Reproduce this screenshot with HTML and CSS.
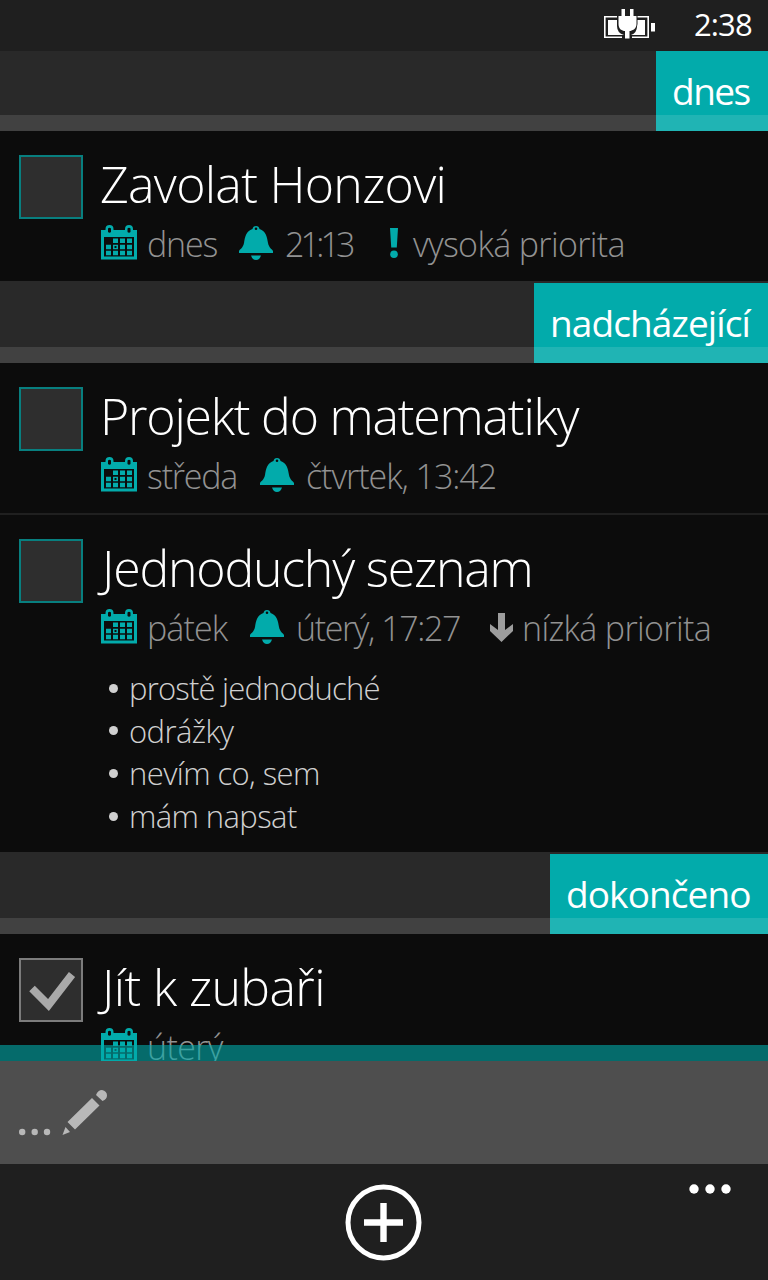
FILE: index.html
```html
<!DOCTYPE html>
<html lang="cs">
<head>
<meta charset="utf-8">
<title>Úkoly</title>
<link rel="stylesheet" href="styles.css">
</head>
<body>
<svg class="defs" aria-hidden="true">
  <symbol id="calendar" viewBox="0 0 36 35">
    <path fill="currentColor" fill-rule="evenodd" d="M0 5H4.500V4Q4.500 0 8.500 0T12.500 4V5H24V4Q24 0 28 0T32 4V5H36V34.500H0ZM7 3.500V7Q8.500 8.500 10 7V3.500Q8.500 2 7 3.500M26.500 3.500V7Q28 8.500 29.500 7V3.500Q28 2 26.500 3.500M3 12V31.500H33V12Z"/>
    <path fill="currentColor" fill-rule="evenodd" d="M12 13.500h5v4.500h-5zM19 13.500h5v4.500h-5zM26 13.500h5v4.500h-5zM5 19.700h5v4.500h-5zM12 19.700h5v4.500h-5zM13.500 21v2h2v-2zM19 19.700h5v4.500h-5zM26 19.700h5v4.500h-5zM5 25.800h5v4.400h-5zM12 25.800h5v4.400h-5zM19 25.800h5v4.400h-5zM26 25.800h5v4.400h-5z"/>
  </symbol>
  <symbol id="bell" viewBox="0 0 34 34">
    <path fill="currentColor" fill-rule="evenodd" d="M13.500 3Q14 0 17 0T20.500 3C27 5 28 11 29 17C30 22 33 23 34 25V27H0V25C1 23 4 22 5 17C6 11 7 5 13.500 3M17 1.500A1.300 1.300 0 0 0 17 4.100A1.300 1.300 0 0 0 17 1.500M12 29.500H22Q20.500 34 17 34T12 29.500"/>
  </symbol>
</svg>
<main class="screen">
  <header class="status">
    <svg class="battery" width="52" height="32" viewBox="0 0 52 32">
      <path fill="none" stroke="#fff" stroke-width="1.600" d="M13 7.800H.8V28.200H18M33 7.800H44.200V28.200H28"/>
      <path fill="#fff" d="M4 11H13V17Q13 24 20 26H4ZM33 11H41V26H27Q33 24 33 17ZM47 14h4v8.500h-4z"/>
      <path fill="#fff" stroke="#1f1f1f" stroke-width="2" paint-order="stroke" d="M17.500 0H21V7H26V0H29.500V7H32.500V15C32.500 20 28 22 25.500 22V29.500H21V22C18 22 14.500 20 14.500 15V7H17.500Z"/>
    </svg>
    <span class="clock">2:38</span>
  </header>

  <section class="group">
    <div class="head first"><h2 class="tab dnes"><span>dnes</span></h2></div>
    <article class="task">
      <span class="check"></span>
      <div class="body">
        <h3 class="title t1">Zavolat Honzovi</h3>
        <div class="meta">
          <svg class="cal"><use href="#calendar"/></svg><span class="w-dnes">dnes</span>
          <svg class="bell"><use href="#bell"/></svg><span class="w-2113">21:13</span>
          <svg class="bang" viewBox="0 0 8 30"><path fill="currentColor" d="M0 0H8L6.800 19.500H1.200Z"/><circle cx="4" cy="26.200" r="3.800" fill="currentColor"/></svg><span class="priority">vysoká priorita</span>
        </div>
      </div>
    </article>
  </section>

  <section class="group">
    <div class="head"><h2 class="tab nad"><span>nadcházející</span></h2></div>
    <article class="task ruled">
      <span class="check"></span>
      <div class="body">
        <h3 class="title t2">Projekt do matematiky</h3>
        <div class="meta">
          <svg class="cal"><use href="#calendar"/></svg><span class="w-streda">středa</span>
          <svg class="bell"><use href="#bell"/></svg><span class="w-ctvrtek">čtvrtek, 13:42</span>
        </div>
      </div>
    </article>
    <article class="task tall">
      <span class="check"></span>
      <div class="body">
        <h3 class="title t3">Jednoduchý seznam</h3>
        <div class="meta">
          <svg class="cal"><use href="#calendar"/></svg><span class="w-patek">pátek</span>
          <svg class="bell"><use href="#bell"/></svg><span class="w-utery">úterý, 17:27</span>
          <svg class="down" viewBox="0 0 23 29"><path fill="currentColor" d="M8 0H15V17L23 11V18L11.500 29L0 18V11L8 17Z"/></svg><span class="priority">nízká priorita</span>
        </div>
        <ul class="notes">
          <li>prostě jednoduché</li>
          <li>odrážky</li>
          <li>nevím co, sem</li>
          <li>mám napsat</li>
        </ul>
      </div>
    </article>
  </section>

  <section class="group last">
    <div class="head"><h2 class="tab dok"><span>dokončeno</span></h2></div>
    <article class="task">
      <span class="check done"><svg width="60" height="60" viewBox="0 0 60 60"><path fill="none" stroke="#a9a9a9" stroke-width="7.800" d="M11 28.500L27.500 45L51 14.500"/></svg></span>
      <div class="body">
        <h3 class="title t4">Jít k zubaři</h3>
        <div class="meta">
          <svg class="cal"><use href="#calendar"/></svg><span class="priority">úterý</span>
        </div>
      </div>
    </article>
    <div class="veil"></div>
  </section>

  <div class="composer">
    <svg width="90" height="48" viewBox="0 0 90 48" fill="#b8b8b8">
      <circle cx="3.200" cy="43" r="3.200"/><circle cx="15.700" cy="43" r="3.200"/><circle cx="28" cy="43" r="3.200"/>
      <path d="M73 9L80.500 16.500L56 40.500L48.500 33ZM46.500 38L51 43L43.500 46ZM77 6Q79 1 83 1Q88 2 88 6.500Q88 10 83.500 12Z"/>
    </svg>
  </div>
  <footer class="appbar">
    <svg class="add" width="77" height="77" viewBox="0 0 77 77"><circle cx="38.500" cy="38.500" r="35.500" fill="none" stroke="#fff" stroke-width="5"/><path d="M38.500 19V58M19 38.500H58" stroke="#fff" stroke-width="6.400"/></svg>
    <svg class="more" width="42" height="10" viewBox="0 0 42 10" fill="#fff"><circle cx="5" cy="5" r="4.700"/><circle cx="21" cy="5" r="4.700"/><circle cx="37" cy="5" r="4.700"/></svg>
  </footer>
</main>
</body>
</html>
```
FILE: styles.css
```css
* { box-sizing: border-box; }
body { margin: 0; background: #0c0c0c; font-family: "Open Sans", "Noto Sans", sans-serif; font-weight: 300; color: #fff; }
.defs { display: block; width: 0; height: 0; }
.screen { width: 768px; height: 1280px; display: flex; flex-direction: column; overflow: hidden; }
h2, h3, ul { margin: 0; padding: 0; font-weight: 300; white-space: nowrap; }

.status { height: 51px; flex: none; background: #1f1f1f; display: flex; justify-content: flex-end; padding-right: 16px; }
.battery { margin: 9px 38px 0 0; }
.clock { width: 58px; font-size: 31px; line-height: 49px; font-weight: 400; white-space: nowrap; letter-spacing: -0.9px; }

.group { flex: none; }
.head { height: 82px; padding-top: 2px; display: flex; justify-content: flex-end; background: linear-gradient(#292929 66px, #414141 66px); }
.head.first { height: 80px; padding-top: 0; background: linear-gradient(#292929 64px, #414141 64px); }
.tab { height: 80px; padding-left: 16px; font-size: 37px; line-height: 80px; font-weight: 400; letter-spacing: -0.9px; background: linear-gradient(#02abab 64px, #20b4b4 64px); }
.dnes { width: 112px; letter-spacing: -1.5px; }
.nad { width: 234px; }
.dok { width: 218px; }

.task { height: 150px; padding: 24px 0 0 19px; display: flex; gap: 17px; background: #0c0c0c; }
.ruled { height: 152px; border-bottom: 2px solid #202020; }
.tall { height: 337px; }
.check { flex: none; width: 64px; height: 64px; border: 2px solid #087f7f; background: #2e2e2e; }
.done { border-color: #7c7c7c; }
.check svg { display: block; }
.title { height: 64px; font-size: 50px; line-height: 59px; }
.t1 { letter-spacing: -0.7px; }
.t2 { letter-spacing: -1.2px; }
.t3 { letter-spacing: -1.2px; text-indent: 2px; }
.t4 { letter-spacing: -0.6px; text-indent: 2px; }
.meta { height: 50px; display: flex; align-items: flex-start; font-size: 34px; line-height: 50px; letter-spacing: -1.2px; color: #929292; white-space: nowrap; }
.meta svg { flex: none; color: #02abab; }
.meta .cal { width: 36px; height: 35px; margin: 6px 10px 0 1px; }
.meta .bell { width: 34px; height: 34px; margin: 7px 12px 0 0; }
.meta .bang { width: 8px; height: 30px; margin: 9px 15px 0 0; }
.meta .down { width: 23px; height: 29px; margin: 10px 9px 0 0; color: #9d9d9d; }
.w-dnes { width: 92px; }
.w-2113 { width: 105px; letter-spacing: -3.8px; }
.w-streda { width: 113px; }
.w-ctvrtek { letter-spacing: -1.05px; }
.w-patek { width: 103px; letter-spacing: -0.9px; }
.w-utery { width: 194px; letter-spacing: -1.4px; }
.priority { letter-spacing: -0.65px; }
.notes { list-style: none; padding: 14px 0 0 9px; font-size: 31px; line-height: 42.6px; letter-spacing: -0.6px; color: #d0d0d0; }
.notes li { display: flex; align-items: center; gap: 11px; }
.notes li:first-child { letter-spacing: -0.8px; }
.notes li::before { content: ""; width: 9px; height: 9px; border-radius: 50%; background: #d0d0d0; }

.last { height: 209px; overflow: hidden; position: relative; }
.veil { position: absolute; inset: auto 0 0 0; height: 16px; background: rgba(2, 171, 171, .6); }
.composer { height: 103px; flex: none; padding: 28px 0 0 19px; background: #4e4e4e; }
.appbar { height: 116px; flex: none; display: grid; grid-template-columns: 345px 77px 1fr; background: #1f1f1f; }
.add { grid-column: 2; margin-top: 20px; }
.more { grid-column: 3; justify-self: end; margin: 20px 37px 0 0; }
```
